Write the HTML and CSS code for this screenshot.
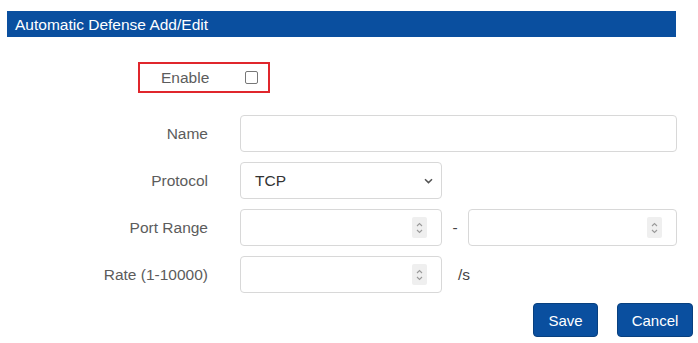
FILE: index.html
```html
<!DOCTYPE html>
<html lang="en">
<head>
    <meta charset="utf-8">
    <title>Automatic Defense Add/Edit</title>
    <link rel="stylesheet" href="styles.css">
</head>
<body>
    <div class="titlebar">Automatic Defense Add/Edit</div>

    <div class="enable">
        <span class="enable-label">Enable</span>
        <span class="check"></span>
    </div>

    <div class="row">
        <label class="lbl">Name</label>
        <div class="field wide"></div>
    </div>

    <div class="row">
        <label class="lbl">Protocol</label>
        <div class="field half select">
            <span class="value">TCP</span>
            <svg class="chev" width="9" height="6" viewBox="0 0 9 6"><path d="M1 1.2 L4.5 4.6 L8 1.2" fill="none" stroke="#555" stroke-width="1.5"/></svg>
        </div>
    </div>

    <div class="row">
        <label class="lbl">Port Range</label>
        <div class="field half num">
            <span class="spin"><svg width="9" height="16" viewBox="0 0 9 16"><path d="M2 6 L4.5 3.5 L7 6 M2 10 L4.5 12.5 L7 10" fill="none" stroke="#9a9a9a" stroke-width="1.1"/></svg></span>
        </div>
        <span class="dash">-</span>
        <div class="field end num">
            <span class="spin"><svg width="9" height="16" viewBox="0 0 9 16"><path d="M2 6 L4.5 3.5 L7 6 M2 10 L4.5 12.5 L7 10" fill="none" stroke="#9a9a9a" stroke-width="1.1"/></svg></span>
        </div>
    </div>

    <div class="row">
        <label class="lbl">Rate (1-10000)</label>
        <div class="field half num">
            <span class="spin"><svg width="9" height="16" viewBox="0 0 9 16"><path d="M2 6 L4.5 3.5 L7 6 M2 10 L4.5 12.5 L7 10" fill="none" stroke="#9a9a9a" stroke-width="1.1"/></svg></span>
        </div>
        <span class="unit">/s</span>
    </div>

    <div class="actions">
        <button class="btn save">Save</button>
        <button class="btn cancel">Cancel</button>
    </div>
</body>
</html>
```

FILE: styles.css
```css
body {
    margin: 0;
    padding-top: 11px;
    background-color: white;
    font-family: "Liberation Sans", Arial, sans-serif;
    font-size: 15.5px;
    color: #5c5c5c;
}
.titlebar {
    margin-left: 7px;
    width: 661px;
    height: 26px;
    line-height: 27px;
    padding-left: 8px;
    background-color: #0a4f9f;
    color: white;
    font-size: 15.5px;
}
.enable {
    display: flex;
    align-items: center;
    box-sizing: border-box;
    margin-top: 25px;
    margin-left: 138px;
    width: 132px;
    height: 31px;
    border: 2px solid #e0262c;
}
.enable-label {
    margin-left: 21px;
}
.check {
    width: 11px;
    height: 11px;
    margin-left: 36px;
    border: 1px solid #777;
    border-radius: 2px;
}
.row {
    display: flex;
    align-items: center;
    height: 37px;
    margin-top: 10px;
}
.enable + .row {
    margin-top: 22px;
}
.lbl {
    width: 208px;
    text-align: right;
    margin-right: 32px;
}
.field {
    box-sizing: border-box;
    height: 37px;
    border: 1px solid #d8d8d8;
    border-radius: 4px;
    display: flex;
    align-items: center;
    background: white;
}
.wide {
    width: 437px;
}
.half {
    width: 202px;
}
.end {
    width: 209px;
}
.select .value {
    margin-left: 14px;
    color: #333;
    flex: 1;
}
.chev {
    margin-right: 8px;
}
.num {
    justify-content: flex-end;
}
.spin {
    display: flex;
    align-items: center;
    justify-content: center;
    width: 15px;
    height: 21px;
    margin-right: 14px;
    background-color: #efefef;
    border-radius: 2px;
}
.dash {
    width: 26px;
    text-align: center;
    color: #444;
}
.unit {
    margin-left: 16px;
    color: #444;
}
.actions {
    display: flex;
    margin-top: 10px;
    margin-left: 533px;
    gap: 19px;
}
.btn {
    height: 34px;
    border: 1px solid #08407f;
    border-radius: 4px;
    background-color: #0a4f9f;
    color: white;
    font-family: "Liberation Sans", Arial, sans-serif;
    font-size: 15px;
}
.save {
    width: 65px;
}
.cancel {
    width: 76px;
}
```
